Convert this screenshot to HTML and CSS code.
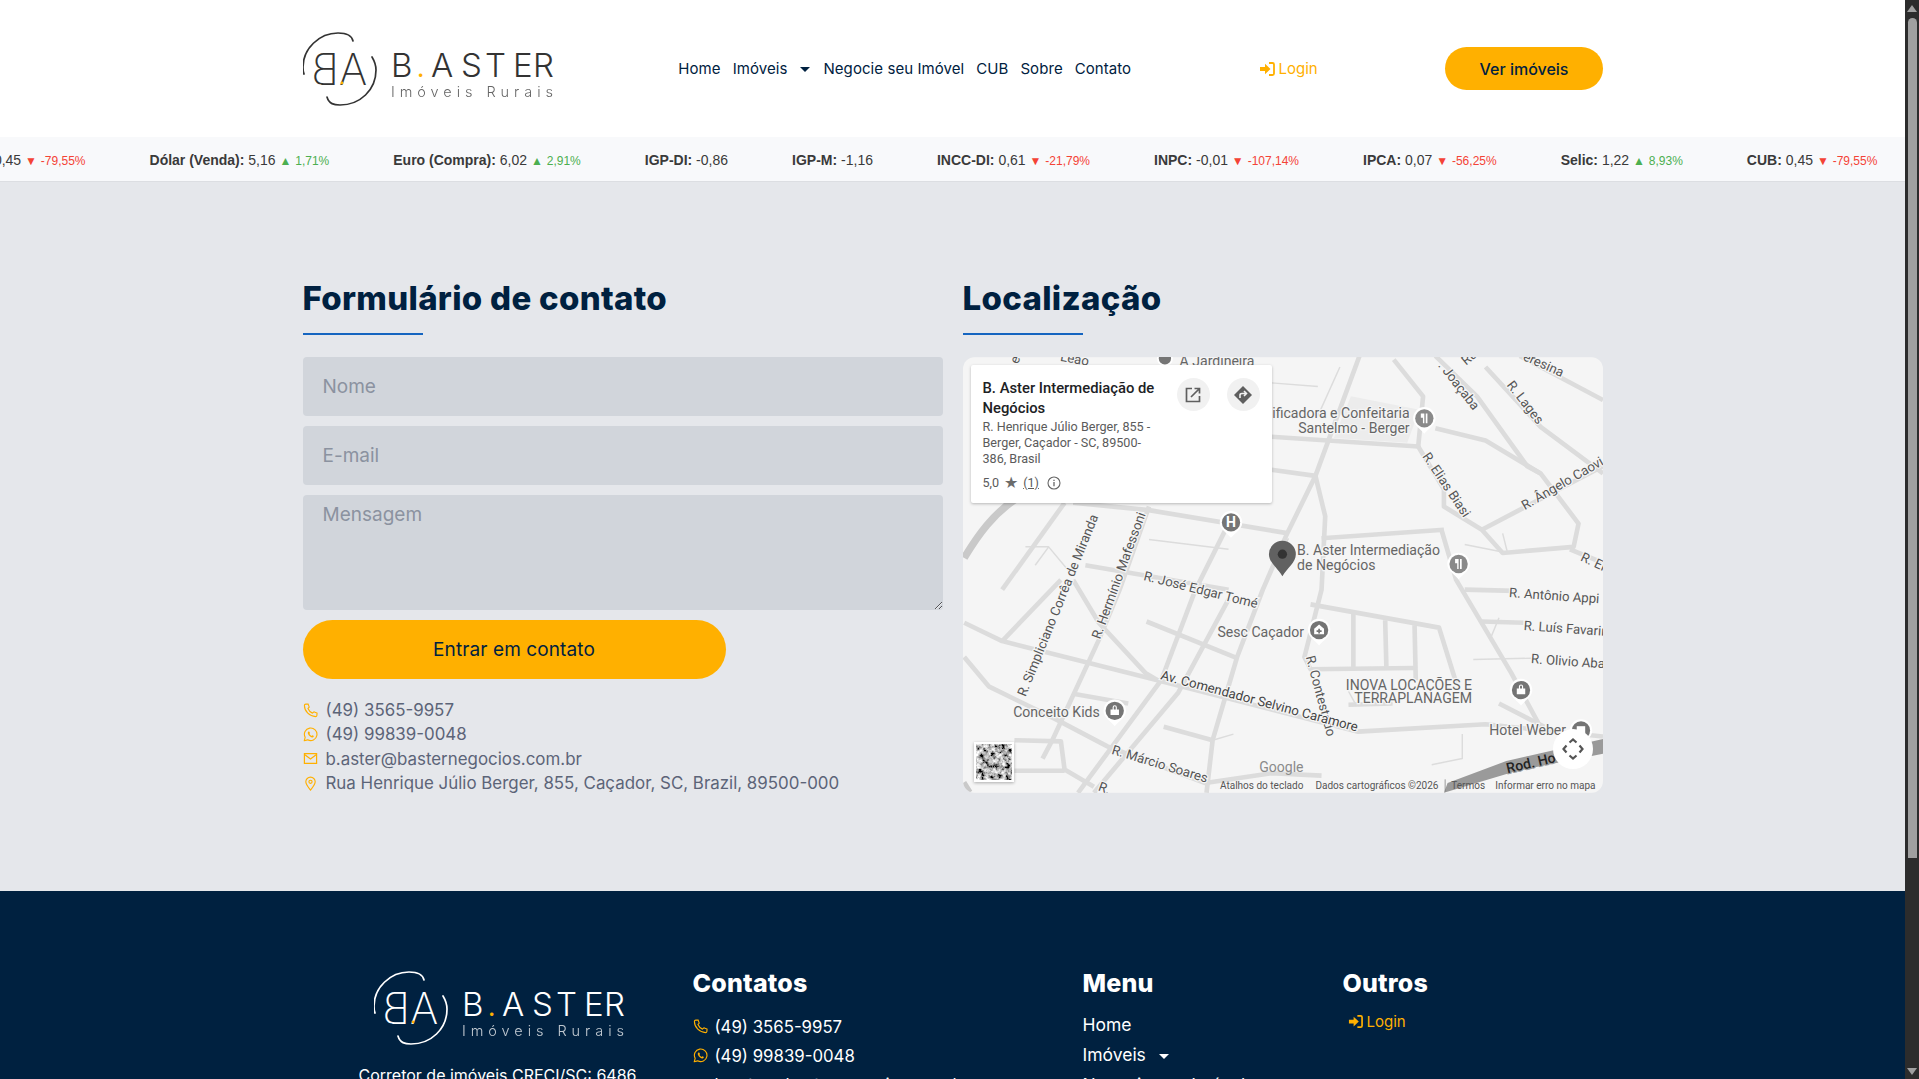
FILE: index.html
```html
<!DOCTYPE html>
<html lang="pt-BR">
<head>
  <meta charset="UTF-8">
  <title>B. Aster Imóveis Rurais - Contato</title>
  <meta name="viewport" content="width=device-width, initial-scale=1.0">
  <link rel="stylesheet" href="styles.css">
</head>
<body>

<!-- shared icons -->
<svg class="defs" width="0" height="0" aria-hidden="true">
  <symbol id="i-phone" viewBox="0 0 16 16">
    <path d="M3 1.2 5.4 1c.4 1.2.8 2.300 1.300 3.400L5.300 5.800c.9 2.200 2.600 4 4.800 5l1.500-1.400c1.100.5 2.200.9 3.400 1.200l-.2 2.600c-.1.800-.7 1.300-1.400 1.300C7 14.300 1.600 9 1.500 2.600 1.500 1.900 2.200 1.300 3 1.200Z" fill="none" stroke="currentColor" stroke-width="1.200" stroke-linejoin="round"/>
  </symbol>
  <symbol id="i-whats" viewBox="0 0 16 16">
    <path d="M1.300 14.700 2.300 11A6.700 6.700 0 1 1 5 13.700Z" fill="none" stroke="currentColor" stroke-width="1.200" stroke-linejoin="round"/>
    <path d="M5.800 4.700c-.8.600-.9 1.700-.3 2.900.8 1.500 2 2.700 3.500 3.300 1.100.4 2 .2 2.500-.7l-.2-.8-1.500-.7-.7.8c-1-.4-1.800-1.200-2.300-2.200l.7-.7-.6-1.600Z" fill="currentColor"/>
  </symbol>
  <symbol id="i-mail" viewBox="0 0 16 16">
    <path d="M1.500 2.800h13v10.400h-13Z" fill="none" stroke="currentColor" stroke-width="1.300"/>
    <path d="m2 4 6 4.600L14 4" fill="none" stroke="currentColor" stroke-width="1.300"/>
  </symbol>
  <symbol id="i-pin" viewBox="0 0 16 16">
    <path d="M8 15C5.500 11.800 3 9 3 6.200a5 5 0 0 1 10 0C13 9 10.500 11.800 8 15Z" fill="none" stroke="currentColor" stroke-width="1.200"/>
    <circle cx="8" cy="6.200" r="1.700" fill="none" stroke="currentColor" stroke-width="1.200"/>
  </symbol>
  <symbol id="i-login" viewBox="0 0 16 16">
    <path d="M1 6h5V2.800L11.500 8 6 13.200V10H1Z" fill="currentColor"/>
    <path d="M10 2h3.500c.8 0 1.500.7 1.500 1.500v9c0 .8-.7 1.500-1.500 1.500H10" fill="none" stroke="currentColor" stroke-width="1.800"/>
  </symbol>
  <symbol id="pin-shape" viewBox="-10 -10 20 24" overflow="visible">
    <path d="M-8 0A8 8 0 1 1 8 0C8 5 3 7 0 11-3 7-8 5-8 0Z" fill="#fff"/>
  </symbol>
</svg>

<div class="window">
  <div class="page">

    <header class="site-header">
      <a class="logo">
        <svg width="252" height="74" viewBox="0 0 252 74">
          <g fill="none" stroke="currentColor" stroke-width="1.700" stroke-linecap="round">
            <path d="M50 9C49 4 45 1 35 1C16 1 0 17 0 35Q0 40 1 42"/>
            <path d="M69 25C72 30 73 34 73 38C73 58 57 73 37 73C31 73 26 72 24 65"/>
          </g>
          <text class="logo-mono" transform="translate(36 53) scale(-1 1)" font-size="43">B</text>
          <text class="logo-mono" x="36" y="53" font-size="43">A</text>
          <circle cx="39" cy="51" r="1.400" fill="#ffb000"/>
          <text class="logo-name" x="88 113 128 158 182 210 230" y="45" font-size="33">B<tspan fill="#ffb000">.</tspan>ASTER</text>
          <text class="logo-sub" x="88" y="65" font-size="14.500" textLength="162">Imóveis Rurais</text>
        </svg>
      </a>
      <nav class="main-nav">
        <a>Home</a>
        <a class="has-caret">Imóveis</a>
        <a>Negocie seu Imóvel</a>
        <a>CUB</a>
        <a>Sobre</a>
        <a>Contato</a>
      </nav>
      <a class="login"><svg width="16" height="16"><use href="#i-login"/></svg>Login</a>
      <a class="btn-header">Ver imóveis</a>
    </header>

    <div class="ticker">
      <div class="ticker-track">
        <span class="tick"><b>CUB:</b> 0,45 <i class="down">▼</i> <em class="down">-79,55%</em></span>
        <span class="tick"><b>Dólar (Venda):</b> 5,16 <i class="up">▲</i> <em class="up">1,71%</em></span>
        <span class="tick"><b>Euro (Compra):</b> 6,02 <i class="up">▲</i> <em class="up">2,91%</em></span>
        <span class="tick"><b>IGP-DI:</b> -0,86</span>
        <span class="tick"><b>IGP-M:</b> -1,16</span>
        <span class="tick"><b>INCC-DI:</b> 0,61 <i class="down">▼</i> <em class="down">-21,79%</em></span>
        <span class="tick"><b>INPC:</b> -0,01 <i class="down">▼</i> <em class="down">-107,14%</em></span>
        <span class="tick"><b>IPCA:</b> 0,07 <i class="down">▼</i> <em class="down">-56,25%</em></span>
        <span class="tick"><b>Selic:</b> 1,22 <i class="up">▲</i> <em class="up">8,93%</em></span>
        <span class="tick"><b>CUB:</b> 0,45 <i class="down">▼</i> <em class="down">-79,55%</em></span>
        <span class="tick"><b>Dólar (Venda):</b> 5,16</span>
      </div>
    </div>

    <main class="contact">
      <section class="col">
        <h2>Formulário de contato</h2>
        <form class="contact-form">
          <input type="text" placeholder="Nome">
          <input type="email" placeholder="E-mail">
          <textarea placeholder="Mensagem"></textarea>
          <button type="button">Entrar em contato</button>
        </form>
        <ul class="contact-list">
          <li><svg><use href="#i-phone"/></svg>(49) 3565-9957</li>
          <li><svg><use href="#i-whats"/></svg>(49) 99839-0048</li>
          <li><svg><use href="#i-mail"/></svg>b.aster@basternegocios.com.br</li>
          <li><svg><use href="#i-pin"/></svg>Rua Henrique Júlio Berger, 855, Caçador, SC, Brazil, 89500-000</li>
        </ul>
      </section>

      <section class="col">
        <h2>Localização</h2>
        <div class="map">
          <!-- viewBox uses the same numbers as the shrunk screenshot -->
          <svg class="map-canvas" viewBox="787 292 523 356" width="640" height="436">
            <defs>
              <filter id="noise" x="0" y="0" width="100%" height="100%">
                <feTurbulence type="fractalNoise" baseFrequency="0.2" numOctaves="4" seed="7"/>
                <feColorMatrix values="2.400 0 0 0 -0.75 2.400 0 0 0 -0.75 2.400 0 0 0 -0.75 0 0 0 0 1"/>
              </filter>
            </defs>
            <rect x="787" y="292" width="523" height="356" fill="#f5f5f5"/>
            <path d="M1104 324 1090 358 1150 362 1160 335Z" fill="#ececec"/>
            <path d="M1183 640 1231 622 1310 604V616L1240 630 1180 648Z" fill="#9a9a9a"/>
            <path class="band" d="M830 408C812 420 800 436 788 456"/>
            <path class="band" d="M787 640 792 648"/>

            <g class="roads">
              <path d="M1111 291 1075 389 1051 438 1032 482 1011 537 991 605 986 648"/>
              <path d="M1039 357 1159 365 1163 324 1139 294"/>
              <path d="M1159 365 1180 400 1180 414 1211 433 1228 452 1286 447 1290 428 1259 387 1214 360 1173 350"/>
              <path d="M1173 291 1207 324 1248 381 1259 387"/>
              <path d="M1214 300 1259 349 1310 387"/>
              <path d="M1242 291 1310 327"/>
              <path d="M1211 433 1310 381"/>
              <path d="M1283 449 1310 460"/>
              <path d="M1080 440 1180 433"/>
              <path d="M877 411 939 417 1053 436"/>
              <path d="M1039 384 1075 389 1083 422 1080 482 1066 537 1071 547 1156 546"/>
              <path d="M1071 494 1176 513 1190 558"/>
              <path d="M1106 501V547M1132 507 1133 546M1156 511 1157 556"/>
              <path d="M1102 576 1138 575M1225 575 1262 594"/>
              <path d="M1178 433 1190 474 1235 550 1262 600"/>
              <path d="M1197 482 1238 483M1211 508 1245 509"/>
              <path d="M788 509 819 524 946 556 1110 598 1214 592 1310 602"/>
              <path d="M877 474 898 509 936 550 946 556"/>
              <path d="M939 414 915 482 898 523 860 605 852 620"/>
              <path d="M937 508 1011 538"/>
              <path d="M1004 428 977 482 949 556 881 648"/>
              <path d="M1004 490 963 566 894 648"/>
              <path d="M788 537 808 561 863 588 905 610 985 640 1039 632 1080 634"/>
              <path d="M819 524 867 474"/>
              <path d="M877 567 922 575"/>
              <path d="M951 594 991 605"/>
              <path d="M829 605 867 606 870 629 894 643M829 630 870 630"/>
              <path d="M887 462 1004 482"/>
              <path d="M870 411 819 482"/>
            </g>
            <g class="roads thin">
              <path d="M1039 313 1077 316M1095 300 1077 340"/>
              <path d="M939 441 1004 449M1053 440 1040 465"/>
              <path d="M838 447 857 447 877 471M857 447 846 462"/>
              <path d="M1204 539 1252 538M1197 445 1232 452 1228 436"/>
              <path d="M1102 565 1108 576 1138 575M1195 600 1195 620 1170 625"/>
              <path d="M1225 505 1218 522M991 605 1008 600"/>
            </g>

            <g class="map-label">
              <text x="1060" y="454">B. Aster Intermediação</text>
              <text x="1060" y="466">de Negócios</text>
              <text x="1152" y="342" text-anchor="end">ificadora e Confeitaria</text>
              <text x="1152" y="354" text-anchor="end">Santelmo - Berger</text>
              <text x="995" y="521">Sesc Caçador</text>
              <text x="828" y="586">Conceito Kids</text>
              <text x="1203" y="564" text-anchor="end">INOVA LOCAÇÕES E</text>
              <text x="1203" y="575" text-anchor="end">TERRAPLANAGEM</text>
              <text x="1217" y="601">Hotel Weber</text>
              <text x="964" y="299">A Jardineira</text>
            </g>
            <g class="map-road-label">
              <text transform="translate(866 295) rotate(10)">Leão</text>
              <text transform="translate(832 298) rotate(-70)">e</text>
              <text transform="translate(1175 299) rotate(52)">. Joaçaba</text>
              <text transform="translate(1198 299) rotate(-40)">Ru</text>
              <text transform="translate(1244 294) rotate(24)">eresina</text>
              <text transform="translate(1231 315) rotate(52)">R. Lages</text>
              <text transform="translate(1162 373) rotate(56)">R. Elias Biasi</text>
              <text transform="translate(1246 417) rotate(-30)">R. Ângelo Caovi</text>
              <text transform="translate(1291 458) rotate(25)">R. Elias</text>
              <text transform="translate(1233 488) rotate(4)">R. Antônio Appi</text>
              <text transform="translate(1245 515) rotate(4)">R. Luís Favarin</text>
              <text transform="translate(1251 542) rotate(4)">R. Olivio Aba</text>
              <text transform="translate(1067 537) rotate(75)">R. Contestado</text>
              <text transform="translate(948 555) rotate(15)" class="strong">Av. Comendador Selvino Caramore</text>
              <text transform="translate(934 474) rotate(14)">R. José Edgar Tomé</text>
              <text transform="translate(838 570) rotate(-68)">R. Simpliciano Corrêa de Miranda</text>
              <text transform="translate(899 523) rotate(-70)">R. Hermínio Mafessoni</text>
              <text transform="translate(908 616) rotate(17)">R. Márcio Soares</text>
              <text transform="translate(897 646) rotate(20)">R.</text>
              <text transform="translate(1232 632) rotate(-13)" class="rod">Rod. Ho</text>
            </g>

            <!-- place markers -->
            <g class="marker" transform="translate(952 293)">
              <circle r="6.500" fill="#fff"/><circle r="5" fill="#757575"/>
            </g>
            <g class="marker" transform="translate(1006 427) scale(1.150)">
              <use href="#pin-shape" x="-10" y="-10" width="20" height="24"/>
              <circle r="6.500" fill="#757575"/><text y="3.500" text-anchor="middle">H</text>
            </g>
            <g class="marker" transform="translate(1164 342) scale(1.150)">
              <use href="#pin-shape" x="-10" y="-10" width="20" height="24"/>
              <circle r="6.500" fill="#8a8a8a"/><path d="M-2.500-3.500V-.5H-1V3.500H0V-3.500ZM1-3.500V3.500H2.200V-3.500Z" fill="#fff"/>
            </g>
            <g class="marker" transform="translate(1192 461) scale(1.150)">
              <use href="#pin-shape" x="-10" y="-10" width="20" height="24"/>
              <circle r="6.500" fill="#8a8a8a"/><path d="M-2.500-3.500V-.5H-1V3.500H0V-3.500ZM1-3.500V3.500H2.200V-3.500Z" fill="#fff"/>
            </g>
            <g class="marker" transform="translate(1078 515) scale(1.150)">
              <use href="#pin-shape" x="-10" y="-10" width="20" height="24"/>
              <circle r="6.500" fill="#757575"/><path d="M0-4-3.500-1V3H3.500V-1ZM-.6-1H.6V.2H1.800V1.400H.6V2.400H-.6V1.400H-1.800V.2H-.6Z" fill="#fff"/>
            </g>
            <g class="marker" transform="translate(911 581) scale(1.150)">
              <use href="#pin-shape" x="-10" y="-10" width="20" height="24"/>
              <circle r="6.500" fill="#757575"/><path d="M-3-1H3V3H-3ZM-1.500-1V-2.500A1.500 1.500 0 0 1 1.500-2.500V-1H.7V-2.500A.7.7 0 0 0-.7-2.500V-1Z" fill="#fff"/>
            </g>
            <g class="marker" transform="translate(1243 564) scale(1.150)">
              <use href="#pin-shape" x="-10" y="-10" width="20" height="24"/>
              <circle r="6.500" fill="#757575"/><path d="M-3-1H3V3H-3ZM-1.500-1V-2.500A1.500 1.500 0 0 1 1.500-2.500V-1H.7V-2.500A.7.7 0 0 0-.7-2.500V-1Z" fill="#fff"/>
            </g>
            <g class="marker" transform="translate(1292 597) scale(1.150)">
              <use href="#pin-shape" x="-10" y="-10" width="20" height="24"/>
              <circle r="6.500" fill="#757575"/><path d="M-3-3H3V3H-3Z" fill="#fff"/>
            </g>
            <path d="M1048 471C1044 464 1037 460 1037 453A11 11 0 0 1 1059 453C1059 460 1052 464 1048 471Z" fill="#616161"/>
            <circle cx="1048" cy="453" r="3.800" fill="#333"/>

            <text class="g-logo" x="1029" y="631">Google</text>
            <g class="map-foot">
              <text x="997" y="645">Atalhos do teclado</text>
              <text x="1075" y="645">Dados cartográficos ©2026</text>
              <text x="1186" y="645">Termos</text>
              <text x="1222" y="645">Informar erro no mapa</text>
            </g>
            <path d="M1181 637V647" stroke="#777" stroke-width=".6"/>
          </svg>

          <div class="map-card">
            <div class="map-card-text">
              <strong>B. Aster Intermediação de Negócios</strong>
              <p>R. Henrique Júlio Berger, 855 - Berger, Caçador - SC, 89500-386, Brasil</p>
              <div class="map-rating">5,0 <span class="star">★</span> <u>(1)</u>
                <svg class="info" width="14" height="14" viewBox="0 0 14 14"><circle cx="7" cy="7" r="6" fill="none" stroke="#666" stroke-width="1.100"/><path d="M7 6v4.200M7 3.800v1.200" stroke="#666" stroke-width="1.300"/></svg>
              </div>
            </div>
            <span class="map-action">
              <svg width="18" height="18" viewBox="0 0 18 18"><path d="M8 2.500H2.500V15.500H15.500V10M7 11 15.500 2.500M10.500 2.500H15.500V7.500" fill="none" stroke="#5f5f5f" stroke-width="1.700"/></svg>
            </span>
            <span class="map-action">
              <svg width="20" height="20" viewBox="0 0 20 20"><path d="M10 1 19 10 10 19 1 10Z" fill="#5f5f5f"/><path d="M7 13V10C7 9 8 8.500 9 8.500H13M11 6 13.500 8.500 11 11" fill="none" stroke="#f1f1f1" stroke-width="1.600"/></svg>
            </span>
          </div>

          <span class="map-thumb"><svg width="36" height="36"><rect width="36" height="36" filter="url(#noise)"/></svg></span>
          <span class="map-move">
            <svg width="22" height="22" viewBox="0 0 22 22"><path d="M7.500 4.500 11 1.500 14.500 4.500M7.500 17.500 11 20.500 14.500 17.500M4.500 7.500 1.500 11 4.500 14.500M17.500 7.500 20.500 11 17.500 14.500" fill="none" stroke="#555" stroke-width="2.200"/></svg>
          </span>
        </div>
      </section>
    </main>

    <footer class="site-footer">
      <div class="footer-grid">
        <div class="footer-brand">
          <svg width="252" height="74" viewBox="0 0 252 74">
            <g fill="none" stroke="currentColor" stroke-width="1.700" stroke-linecap="round">
              <path d="M50 9C49 4 45 1 35 1C16 1 0 17 0 35Q0 40 1 42"/>
              <path d="M69 25C72 30 73 34 73 38C73 58 57 73 37 73C31 73 26 72 24 65"/>
            </g>
            <text class="logo-mono" transform="translate(36 53) scale(-1 1)" font-size="43">B</text>
            <text class="logo-mono" x="36" y="53" font-size="43">A</text>
            <circle cx="39" cy="51" r="1.400" fill="#ffb000"/>
            <text class="logo-name" x="88 113 128 158 182 210 230" y="45" font-size="33">B<tspan fill="#ffb000">.</tspan>ASTER</text>
            <text class="logo-sub" x="88" y="65" font-size="14.500" textLength="162">Imóveis Rurais</text>
          </svg>
          <p>Corretor de imóveis CRECI/SC: 6486</p>
        </div>
        <div>
          <h3>Contatos</h3>
          <ul class="footer-list">
            <li><svg><use href="#i-phone"/></svg>(49) 3565-9957</li>
            <li><svg><use href="#i-whats"/></svg>(49) 99839-0048</li>
            <li><svg><use href="#i-mail"/></svg>b.aster@basternegocios.com.br</li>
          </ul>
        </div>
        <div>
          <h3>Menu</h3>
          <ul class="footer-list menu">
            <li>Home</li>
            <li class="has-caret">Imóveis</li>
            <li>Negocie seu Imóvel</li>
          </ul>
        </div>
        <div>
          <h3>Outros</h3>
          <a class="login footer-login"><svg width="15" height="15"><use href="#i-login"/></svg>Login</a>
        </div>
      </div>
    </footer>

  </div>

  <div class="scrollbar">
    <span class="arrow-up"></span>
    <span class="thumb"></span>
    <span class="arrow-down"></span>
  </div>
</div>

</body>
</html>
```

FILE: styles.css
```css
* { box-sizing: border-box; }
html, body {
  margin: 0;
  padding: 0;
  height: 100%;
  overflow: hidden;
}
body {
  font-family: 'Inter', 'Noto Sans', sans-serif;
  color: #002140;
  background: #fff;
}
a { color: inherit; text-decoration: none; }
ul { list-style: none; margin: 0; padding: 0; }
.defs { position: absolute; }

.window {
  display: flex;
  height: 100vh;
}
.page {
  flex: 1;
  min-width: 0;
  overflow: hidden;
}

/* fake browser scrollbar */
.scrollbar {
  width: 14px;
  flex-shrink: 0;
  background: #2c2c2c;
  display: flex;
  flex-direction: column;
  align-items: center;
  padding: 5px 0 4px;
}
.arrow-up, .arrow-down {
  width: 0;
  height: 0;
  border-left: 5px solid transparent;
  border-right: 5px solid transparent;
}
.arrow-up { border-bottom: 7px solid #a0a0a0; }
.arrow-down { border-top: 7px solid #a0a0a0; margin-top: auto; }
.thumb {
  width: 9px;
  height: 840px;
  margin-top: 6px;
  background: #a0a0a0;
  border-radius: 5px 5px 0 0;
}

/* header */
.site-header {
  width: 1300px;
  height: 137px;
  margin-left: 303px;
  display: flex;
  align-items: center;
  justify-content: space-between;
}
.logo { display: flex; color: #333; margin-right: -4px; }
.logo-mono { font-family: 'Inter', sans-serif; font-weight: 200; fill: currentColor; }
.logo-name { font-family: 'Inter', sans-serif; font-weight: 300; fill: currentColor; }
.logo-sub { font-family: 'Inter', sans-serif; font-weight: 300; fill: currentColor; opacity: .75; }
.main-nav {
  display: flex;
  align-items: center;
  gap: 12px;
  font-size: 15px;
  letter-spacing: .07px;
  color: #002140;
}
.has-caret::after {
  content: "";
  display: inline-block;
  width: 0;
  height: 0;
  margin-left: 13px;
  vertical-align: 2px;
  border-left: 5px solid transparent;
  border-right: 5px solid transparent;
  border-top: 5px solid currentColor;
}
.main-nav .has-caret { margin-right: 1px; }
.login {
  display: flex;
  align-items: center;
  gap: 4px;
  font-size: 15px;
  color: #ffb000;
}
.btn-header {
  width: 158px;
  height: 43px;
  border-radius: 22px;
  background: #ffb000;
  display: flex;
  align-items: center;
  justify-content: center;
  font-size: 16px;
  font-weight: 500;
}

/* indicators bar */
.ticker {
  height: 45px;
  padding-top: 2px;
  background: #f8f9fb;
  border-bottom: 1px solid #dcdee2;
  overflow: hidden;
}
.ticker-track {
  display: flex;
  align-items: center;
  gap: 64px;
  height: 100%;
  margin-left: -45px;
  white-space: nowrap;
  font-family: 'Liberation Sans', sans-serif;
  font-size: 14px;
  color: #3a3a3a;
}
.tick b { font-weight: 700; }
.tick i { font-style: normal; font-size: 12px; }
.tick em { font-style: normal; font-size: 12px; }
.up { color: #4caf50; }
.down { color: #f44336; }

/* contact section */
.contact {
  height: 709px;
  background: #e5e7eb;
  padding-top: 94px;
  display: flex;
  justify-content: center;
  gap: 20px;
}
.col { width: 640px; }
.col h2 {
  margin: 0 0 22px;
  height: 59px;
  font-size: 33px;
  line-height: 44px;
  letter-spacing: .3px;
  font-weight: 800;
  color: #002140;
  position: relative;
}
.col h2::after {
  content: "";
  position: absolute;
  left: 0;
  bottom: 0;
  width: 120px;
  height: 2px;
  background: #1565c0;
}
.contact-form {
  display: flex;
  flex-direction: column;
  gap: 10px;
}
.contact-form input,
.contact-form textarea {
  width: 100%;
  height: 59px;
  padding: 0 20px;
  border: none;
  border-radius: 4px;
  background: #d1d5db;
  font-family: inherit;
  font-size: 19px;
  color: #333;
  outline: none;
}
.contact-form textarea {
  height: 115px;
  padding-top: 8px;
  display: block;
}
::placeholder { color: #8b92a0; opacity: 1; }
.contact-form button {
  width: 423px;
  height: 59px;
  border: none;
  border-radius: 30px;
  background: #ffb000;
  color: #002140;
  font-family: inherit;
  font-size: 19px;
  font-weight: 400;
  letter-spacing: .1px;
}
.contact-list {
  margin-top: 19px;
  font-size: 16.900px;
  color: #5c6478;
}
.contact-list li {
  display: flex;
  align-items: center;
  gap: 8px;
  height: 24.300px;
}
.contact-list svg,
.footer-list svg {
  width: 15px;
  height: 15px;
  color: #ffb000;
  flex-shrink: 0;
}

/* map */
.map {
  position: relative;
  width: 640px;
  height: 436px;
  border-radius: 12px;
  overflow: hidden;
}
.map-canvas { display: block; }
.band { fill: none; stroke: #c9c9c9; stroke-width: 6; }
.roads { fill: none; stroke: #dcdcdc; stroke-width: 3.800; stroke-linejoin: round; }
.roads.thin { stroke-width: 1.200; }
.map-label text {
  font-family: 'Roboto', sans-serif;
  font-size: 11.500px;
  fill: #666;
  paint-order: stroke;
  stroke: #f5f5f5;
  stroke-width: 2px;
}
.map-road-label text {
  font-family: 'Roboto', sans-serif;
  font-size: 10.800px;
  fill: #555;
  paint-order: stroke;
  stroke: #f5f5f5;
  stroke-width: 2px;
}
.map-road-label .strong { fill: #444; }
.map-road-label .rod { fill: #222; font-weight: 500; font-size: 11.500px; stroke: #9a9a9a; }
.marker text { font-family: 'Roboto', sans-serif; font-size: 10px; font-weight: 700; fill: #fff; }
.g-logo { font-family: 'Roboto', sans-serif; font-size: 11.500px; fill: #8a8a8a; }
.map-foot text { font-family: 'Roboto', sans-serif; font-size: 8.200px; fill: #555; }

.map-card {
  position: absolute;
  top: 8px;
  left: 8px;
  width: 301px;
  height: 138px;
  padding: 13px 12px 0 12px;
  background: #fff;
  border-radius: 2px;
  box-shadow: 0 1px 3px rgba(0,0,0,0.25);
  display: flex;
  align-items: flex-start;
  gap: 17px;
  font-family: 'Roboto', sans-serif;
}
.map-card-text { width: 177px; flex-shrink: 0; }
.map-card strong {
  display: block;
  font-size: 14.800px;
  line-height: 20px;
  font-weight: 500;
  color: #202124;
}
.map-card p {
  margin: 1px 0 0;
  font-size: 12.600px;
  line-height: 16px;
  color: #5b5b5b;
}
.map-rating {
  display: flex;
  align-items: center;
  gap: 5px;
  margin-top: 8px;
  font-size: 12.600px;
  color: #5b5b5b;
}
.star { font-size: 16px; line-height: 14px; color: #6b6b6b; }
.info { margin-left: 3px; }
.map-action {
  width: 33px;
  height: 33px;
  border-radius: 50%;
  background: #f1f1f1;
  display: flex;
  align-items: center;
  justify-content: center;
  flex-shrink: 0;
}
.map-thumb {
  position: absolute;
  left: 11px;
  bottom: 11px;
  width: 40px;
  height: 40px;
  border: 2px solid #fff;
  box-shadow: 0 1px 3px rgba(0,0,0,0.3);
  display: flex;
}
.map-move {
  position: absolute;
  right: 10px;
  bottom: 24px;
  width: 40px;
  height: 40px;
  border-radius: 50%;
  background: #fff;
  display: flex;
  align-items: center;
  justify-content: center;
}

/* footer */
.site-footer {
  background: #002140;
  color: #fff;
  padding-top: 76px;
  height: 400px;
}
.footer-grid {
  width: 1300px;
  margin: 0 auto;
  display: grid;
  grid-template-columns: 390px 390px 260px 260px;
}
.footer-brand {
  margin-top: 4px;
  text-align: center;
  color: #fff;
}
.footer-brand svg { display: block; margin-left: 71px; }
.footer-brand p { margin: 20px 0 0; font-size: 16px; }
.site-footer h3 {
  margin: 0 0 13px;
  font-size: 25px;
  line-height: 32px;
  letter-spacing: .2px;
  font-weight: 800;
}
.footer-list { font-size: 16.800px; }
.footer-list li {
  display: flex;
  align-items: center;
  gap: 7px;
  height: 29px;
}
.footer-list.menu { font-size: 17.500px; margin-top: -2px; }
.footer-list.menu li { display: block; line-height: 29px; height: 30px; }
.footer-login { margin-left: 5px; margin-top: 9px; }
```
